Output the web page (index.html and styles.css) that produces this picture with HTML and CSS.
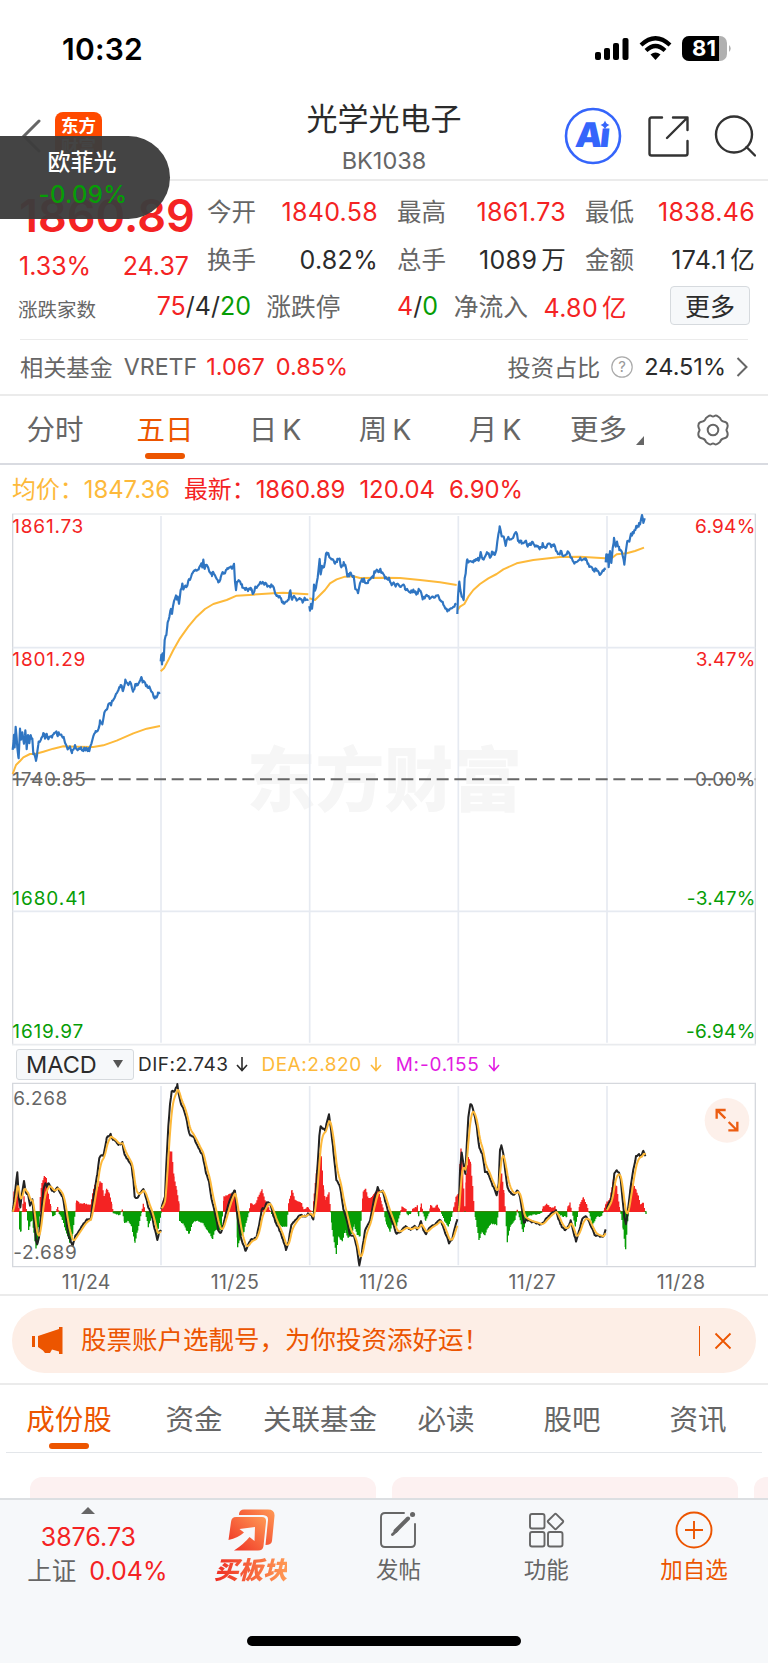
FILE: index.html
```
<!DOCTYPE html>
<html lang="zh-CN">
<head>
    <meta charset="UTF-8">
    <meta name="viewport" content="width=device-width, initial-scale=1.0">
    <title>光学光电子 BK1038</title>
    <link rel="stylesheet" href="styles.css">
</head>
<body>
    <div class="statusbar">
        <span class="clock">10:32</span>
        <svg class="status-icons" width="140" height="30" viewBox="0 0 140 30">
            <rect x="1" y="18" width="6" height="8" rx="2"/>
            <rect x="10" y="14" width="6" height="12" rx="2"/>
            <rect x="19" y="9" width="6" height="17" rx="2"/>
            <rect x="28.500" y="4" width="6" height="22" rx="2"/>
            <g fill="none" stroke="#000" stroke-width="4.200">
                <path d="M47 11Q61.500 -2.500 76 11"/>
                <path d="M52 16.500Q61.500 7.500 71 16.500"/>
            </g>
            <path d="M56.500 20.500Q61.500 16.500 66.500 20.500L61.500 26Z"/>
            <rect x="88" y="2" width="45" height="25" rx="7" fill="#b0b0b0"/>
            <path d="M95 2h30v25h-30a7 7 0 0 1-7-7v-11a7 7 0 0 1 7-7z"/>
            <path d="M135 11q3.500 3.500 0 7z" fill="#b0b0b0"/>
            <text class="battery-num" x="110" y="22" text-anchor="middle">81</text>
        </svg>
    </div>

    <header class="header">
        <div class="header-left">
            <svg width="20" height="34" viewBox="0 0 20 34"><path d="M18 2L3 17L18 32" fill="none" stroke="#666" stroke-width="3" stroke-linecap="round"/></svg>
            <div class="logo"><span>东方</span><span>财富</span></div>
        </div>
        <div class="header-title">
            <h1>光学光电子</h1>
            <p>BK1038</p>
        </div>
        <div class="header-icons">
            <svg width="58" height="58" viewBox="0 0 58 58">
                <circle cx="29" cy="29" r="27" fill="none" stroke="#3565fb" stroke-width="2.600"/>
                <text class="ai-text" transform="translate(10.500 39.500) skewX(-6)"><tspan>A</tspan><tspan x="24.500">ı</tspan></text>
                <path d="M41 13.500q1 3.500 4.500 4.500q-3.500 1-4.500 4.500q-1-3.500-4.500-4.500q3.500-1 4.500-4.500z" fill="#3565fb"/>
            </svg>
            <svg width="42" height="42" viewBox="0 0 42 42" fill="none" stroke="#333" stroke-width="2.400" stroke-linecap="round" stroke-linejoin="round">
                <path d="M15 2.500H4.500q-2 0-2 2v34q0 2 2 2h34q2 0 2-2V26M26 2.500h14.500V15M40 3L20 23"/>
            </svg>
            <svg width="42" height="42" viewBox="0 0 42 42" fill="none" stroke="#333" stroke-width="2.400" stroke-linecap="round">
                <circle cx="20" cy="19.500" r="18"/><path d="M32.500 32L41 40.500"/>
            </svg>
        </div>
    </header>

    <div class="float-stock">
        <b>欧菲光</b>
        <i>-0.09%</i>
    </div>

    <section class="quote">
        <div class="quote-top">
            <div class="quote-price">
                <strong class="price">1860.89</strong>
                <div class="change"><span>1.33%</span><span>24.37</span></div>
            </div>
            <div class="quote-grid">
                <div class="cell"><label>今开</label><span class="red">1840.58</span></div>
                <div class="cell"><label>最高</label><span class="red">1861.73</span></div>
                <div class="cell"><label>最低</label><span class="red">1838.46</span></div>
                <div class="cell"><label>换手</label><span>0.82%</span></div>
                <div class="cell"><label>总手</label><span>1089<em>万</em></span></div>
                <div class="cell"><label>金额</label><span>174.1<em>亿</em></span></div>
            </div>
        </div>
        <div class="quote-bottom">
            <label class="small-label">涨跌家数</label>
            <span class="updown"><span class="red">75</span>/4/<span class="green">20</span></span>
            <label class="limit-label">涨跌停</label>
            <span class="limit"><span class="red">4</span>/<span class="green">0</span></span>
            <label class="flow-label">净流入</label>
            <span class="flow red">4.80<em>亿</em></span>
            <button class="more-btn">更多</button>
        </div>
        <div class="fund">
            <label>相关基金</label>
            <label class="fund-name">VRETF</label>
            <span class="red">1.067</span>
            <span class="red fund-pct">0.85%</span>
            <label class="fund-ratio">投资占比</label>
            <svg width="22" height="22" viewBox="0 0 22 22"><circle cx="11" cy="11" r="10.200" fill="none" stroke="#aaa" stroke-width="1.200"/><text class="help" x="11" y="16.200" text-anchor="middle">?</text></svg>
            <span class="ratio-num">24.51%</span>
            <svg width="12" height="20" viewBox="0 0 12 20"><path d="M1.500 1L10.500 10L1.500 19" fill="none" stroke="#666" stroke-width="2"/></svg>
        </div>
    </section>

    <nav class="tabs">
        <a>分时</a>
        <a class="active">五日</a>
        <a>日<s></s>K</a>
        <a>周<s></s>K</a>
        <a>月<s></s>K</a>
        <a class="tab-more">更多<svg width="8" height="9" viewBox="0 0 8 9"><path d="M8 0V9H0z" fill="#666"/></svg></a>
        <a class="tab-gear"><svg width="34" height="32" viewBox="0 0 34 32" fill="none" stroke="#666" stroke-width="2" stroke-linejoin="round"><path d="M12 2.500Q14 1 15.500 2Q17 3 18.500 2Q20 1 22 2.500L24 4Q25 7 27.500 7.500Q31 8 31.500 10.500Q32 12.500 31 14.500Q30 16 31 17.500Q32 19.500 31.500 21.500Q31 24 27.500 24.500Q25 25 24 28L22 29.500Q20 31 18.500 30Q17 29 15.500 30Q14 31 12 29.500L10 28Q9 25 6.500 24.500Q3 24 2.500 21.500Q2 19.500 3 17.500Q4 16 3 14.500Q2 12.500 2.500 10.500Q3 8 6.500 7.500Q9 7 10 4z"/><circle cx="17" cy="16" r="5.300"/></svg></a>
    </nav>

    <div class="legend">
        <span class="gold">均价：<u>1847.36</u></span>
        <span class="red legend-last">最新：<u>1860.89</u></span>
        <span class="red">120.04</span>
        <span class="red">6.90%</span>
    </div>

    <!-- viewBox units are 3 per pixel -->
    <svg class="price-chart" viewBox="0 36 2304 1602">
        <text class="watermark" x="740" y="918" textLength="826" lengthAdjust="spacingAndGlyphs">东方财富</text>
        <path class="frame" d="M36 42H2268"/>
        <path class="frame side" d="M38 42V1632M2266 42V1632"/>
        <path class="grid" d="M38 443H2266M38 1234H2266M483 48V1628M929 48V1628M1375 48V1628M1821 48V1628"/>
        <path class="frame" d="M36 1634H2268"/>
        <path class="zero" d="M38 838H2266"/>
        <g id="avg" class="line-gold"></g>
        <g id="price" class="line-blue"></g>
        <g class="axis red">
            <text x="37" y="99" textLength="214">1861.73</text>
            <text x="37" y="497" textLength="220">1801.29</text>
            <text x="2267" y="99" text-anchor="end">6.94%</text>
            <text x="2267" y="497" text-anchor="end">3.47%</text>
        </g>
        <g class="axis gray">
            <text x="37" y="857" textLength="221">1740.85</text>
            <text x="2267" y="857" text-anchor="end">0.00%</text>
        </g>
        <g class="axis green">
            <text x="37" y="1216" textLength="221">1680.41</text>
            <text x="37" y="1613" textLength="214">1619.97</text>
            <text x="2267" y="1216" text-anchor="end">-3.47%</text>
            <text x="2267" y="1613" text-anchor="end">-6.94%</text>
        </g>
    </svg>

    <div class="macd-bar">
        <button class="macd-btn">MACD <svg width="10" height="9" viewBox="0 0 10 9"><path d="M0 0h10L5 8z" fill="#555"/></svg></button>
        <span class="dif">DIF:2.743 <svg class="arrow" viewBox="0 0 12 16"><path d="M6 1V14M1 9L6 14.500L11 9"/></svg></span>
        <span class="dea">DEA:2.820 <svg class="arrow" viewBox="0 0 12 16"><path d="M6 1V14M1 9L6 14.500L11 9"/></svg></span>
        <span class="m">M:-0.155 <svg class="arrow" viewBox="0 0 12 16"><path d="M6 1V14M1 9L6 14.500L11 9"/></svg></span>
    </div>

    <svg class="macd-chart" viewBox="0 156 2304 558">
        <path class="grid" d="M483 168V706M929 168V706M1375 168V706M1821 168V706"/>
        <path class="frame box" d="M38 160H2266V710H38z"/>
        <path id="bars-up" fill="#f42323"/>
        <path id="bars-down" fill="#069d06"/>
        <g id="dif" class="line-black"></g>
        <g id="dea" class="line-gold macd-gold"></g>
        <g class="axis gray">
            <text x="40" y="226" textLength="163">6.268</text>
            <text x="40" y="686" textLength="191">-2.689</text>
        </g>
        <circle cx="2181" cy="271" r="67" fill="#fdf0ea"/>
        <path d="M2176 265L2152 241M2150 266V240H2177M2186 276L2210 300M2212 275V301H2185" fill="none" stroke="#ec5d12" stroke-width="7"/>
    </svg>
    <div class="dates"><span>11/24</span><span>11/25</span><span>11/26</span><span>11/27</span><span>11/28</span></div>

    <div class="banner-wrap">
        <div class="banner">
            <svg width="31" height="28" viewBox="0 0 31 28" fill="#ec5500"><path d="M0 9h3v11H0zM6 9L27 2V0h3.500v27H27v-2.500L20 22.500L18 26H13L11 23.500L6 20z"/></svg>
            <span class="banner-text">股票账户选靓号，为你投资添好运！</span>
            <span class="banner-line"></span>
            <svg width="18" height="18" viewBox="0 0 18 18"><path d="M1.500 1.500l15 15M16.500 1.500l-15 15" stroke="#ec5500" stroke-width="1.800"/></svg>
        </div>
    </div>

    <nav class="tabs tabs2">
        <a class="active">成份股</a>
        <a>资金</a>
        <a>关联基金</a>
        <a>必读</a>
        <a>股吧</a>
        <a>资讯</a>
    </nav>
    <div class="cards"><div></div><div></div><div></div></div>

    <footer class="footer">
        <div class="index">
            <svg width="14" height="8" viewBox="0 0 14 8"><path d="M0 7L7 0L14 7z" fill="#666"/></svg>
            <span class="red">3876.73</span>
            <div><label>上证</label><span class="red">0.04%</span></div>
        </div>
        <div class="foot-item buy">
            <svg width="48" height="44" viewBox="0 0 48 44">
                <defs>
                    <linearGradient id="hot" x1="0" y1="1" x2="1" y2="0"><stop offset="0" stop-color="#ee2d22"/><stop offset="1" stop-color="#ff9a55"/></linearGradient>
                </defs>
                <path d="M12 6Q12.500 1.500 17 1.500H41Q48 1.500 47.500 8L45 33Q44.500 37 38.500 37L41 12Q41.500 7.500 36 7H12z" fill="url(#hot)"/>
                <path d="M4 14Q4.500 9 9 9H35Q39.500 9 39 14L36.500 38Q36 42.500 31 42.500H7Q17 36 22.500 29L27.500 33L28 19L12.500 21L17 24.500Q11 30 1.500 32z" fill="url(#hot)"/>
            </svg>
            <span>买板块</span>
        </div>
        <div class="foot-item">
            <svg width="38" height="38" viewBox="0 0 38 38" fill="none" stroke="#666" stroke-width="1.900" stroke-linecap="round">
                <path d="M25 2H6Q2 2 2 6V32Q2 36 6 36H32Q36 36 36 32V13"/>
                <path d="M16.500 20L29 7.500" stroke-width="4"/><path d="M13.500 23.500L18 19.500" stroke-width="3"/><path d="M33.500 3.500h.1" stroke-width="5"/>
            </svg>
            <span>发帖</span>
        </div>
        <div class="foot-item">
            <svg width="38" height="38" viewBox="0 0 38 38" fill="none" stroke="#666" stroke-width="1.900" stroke-linejoin="round">
                <rect x="3" y="3" width="14.500" height="14.500" rx="2"/><rect x="3" y="21" width="14.500" height="14.500" rx="2"/><rect x="21" y="21" width="14.500" height="14.500" rx="2"/>
                <path d="M27.500 3.300Q28.500 2.300 29.500 3.300L35.700 9.500Q36.700 10.500 35.700 11.500L29.500 17.700Q28.500 18.700 27.500 17.700L21.300 11.500Q20.300 10.500 21.300 9.500z"/>
            </svg>
            <span>功能</span>
        </div>
        <div class="foot-item add">
            <svg width="38" height="38" viewBox="0 0 38 38" fill="none" stroke="#ec5500" stroke-width="1.900"><circle cx="19" cy="19" r="17.500"/><path d="M19 10v18M10 19h18"/></svg>
            <span>加自选</span>
        </div>
        <div class="home-bar"></div>
    </footer>

    <script src="chart.js"></script>
</body>
</html>
```
FILE: styles.css
```
* {
    box-sizing: border-box;
}
body {
    margin: 0;
    width: 768px;
    height: 1663px;
    overflow: hidden;
    position: relative;
    background-color: #fff;
    color: #2b2b2b;
    font-family: Inter, "Noto Sans CJK SC", sans-serif;
}
svg {
    display: block;
    flex: none;
}
label {
    color: #666;
}
em, i, u {
    font-style: normal;
    text-decoration: none;
}
.red {
    color: #f42323;
    fill: #f42323;
}
.green {
    color: #069d06;
    fill: #069d06;
}
.gray {
    fill: #666;
}
.gold {
    color: #fdb93a;
}

/* status bar */
.statusbar {
    display: flex;
    justify-content: space-between;
    align-items: center;
    height: 98px;
    padding: 0 34px 0 62px;
}
.clock {
    font-size: 30px;
    font-weight: 600;
    color: #000;
    letter-spacing: 0.2px;
}
.battery-num {
    font-size: 22px;
    font-weight: 700;
    fill: #fff;
}

/* header */
.header {
    display: flex;
    justify-content: space-between;
    height: 83px;
    border-bottom: 2px solid #ebebeb;
}
.header-left {
    display: flex;
    width: 280px;
    padding: 21px 0 0 21px;
}
.logo {
    width: 47px;
    height: 47px;
    margin: -7px 0 0 14px;
    padding-top: 3px;
    border-radius: 8px;
    background-color: #ff4a00;
    color: #fff;
    font-size: 17.500px;
    font-weight: 700;
    line-height: 21px;
    text-align: center;
}
.logo span {
    display: block;
}
.header-title {
    text-align: center;
}
.header-title h1 {
    margin: 1px 0 0;
    font-size: 31px;
    line-height: 40px;
    font-weight: 400;
}
.header-title p {
    margin: 10px 0 0;
    color: #666;
    font-size: 23.500px;
    line-height: 24px;
}
.header-icons {
    display: flex;
    align-items: center;
    justify-content: flex-end;
    width: 280px;
    height: 58px;
    margin-top: 9px;
    padding-right: 12px;
    gap: 25px;
}
.ai-text {
    font-size: 34px;
    font-weight: 900;
    fill: #3565fb;
}
.float-stock {
    position: absolute;
    left: 0;
    top: 136px;
    width: 170px;
    height: 83px;
    padding: 9px 15px 0 0;
    border-radius: 0 42px 42px 0;
    background-color: rgba(60, 60, 60, 0.96);
    text-align: center;
}
.float-stock b {
    display: block;
    padding-left: 9px;
    color: #fff;
    font-size: 23px;
    line-height: 34px;
    font-weight: 500;
}
.float-stock i {
    display: block;
    padding-left: 11px;
    color: #069d06;
    font-size: 24px;
    line-height: 32px;
    font-weight: 500;
    letter-spacing: 0.3px;
}

/* quote */
.quote {
    height: 215px;
    border-bottom: 2px solid #ebebeb;
    font-size: 25px;
}
.quote-top {
    display: flex;
    height: 102px;
}
.quote-price {
    width: 207px;
    padding: 6px 0 0 19px;
    color: #f42323;
}
.price {
    display: block;
    font-size: 45px;
    line-height: 58px;
    font-weight: 600;
}
.change {
    display: flex;
    justify-content: space-between;
    padding-right: 18px;
    line-height: 43px;
}
.quote-grid {
    display: grid;
    grid-template-columns: 171px 169px 170px;
    grid-auto-rows: 47.500px;
    column-gap: 19px;
    padding-top: 8px;
}
.cell {
    display: flex;
    justify-content: space-between;
    line-height: 47px;
}
.cell label {
    font-size: 24.500px;
}
.cell span {
    letter-spacing: 0.3px;
}
em {
    font-size: 24.500px;
    margin-left: 4px;
}
.quote-bottom {
    display: flex;
    align-items: center;
    height: 46px;
    padding: 0 18px;
}
.quote-bottom label {
    padding-bottom: 2px;
    font-size: 24.700px;
}
.quote-bottom .small-label {
    width: 139px;
    padding: 5px 0 0;
    font-size: 19.500px;
}
.updown {
    width: 110px;
}
.quote-bottom .limit-label {
    width: 131px;
}
.limit {
    width: 57px;
}
.quote-bottom .flow-label {
    width: 90px;
}
.flow {
    width: 127px;
    letter-spacing: 0.3px;
}
.more-btn {
    width: 80px;
    height: 39px;
    margin-top: -2px;
    padding: 0 0 4px;
    border: 1px solid #d6dade;
    border-radius: 4px;
    background-color: #f6f8fa;
    color: #2b2b2b;
    font: 25px Inter, "Noto Sans CJK SC", sans-serif;
}
.fund {
    display: flex;
    align-items: center;
    height: 54px;
    margin: 10px 20px 0;
    border-top: 1px solid #ebebeb;
    font-size: 23.500px;
}
.fund label {
    padding-bottom: 2px;
    font-size: 23.200px;
}
.fund .fund-name {
    margin: 0 9px 0 11px;
    padding: 0;
}
.fund-pct {
    margin-left: 11px;
}
.fund .fund-ratio {
    margin: 0 11px 0 auto;
}
.help {
    font-size: 15px;
    fill: #999;
}
.ratio-num {
    margin: 0 10px 0 11px;
}

/* tabs */
.tabs {
    display: grid;
    grid-template-columns: repeat(7, 110px);
    height: 69px;
    border-bottom: 2px solid #d9dbe1;
    color: #666;
    font-size: 28.500px;
}
.tabs a {
    display: flex;
    justify-content: center;
    line-height: 68px;
}
.tabs s {
    width: 5px;
}
.tabs .active {
    flex-direction: column;
    justify-content: flex-start;
    align-items: center;
    color: #ec5500;
}
.active::after {
    content: "";
    width: 40px;
    height: 6px;
    margin-top: -11px;
    border-radius: 3px;
    background-color: #ec5500;
}
.tab-more svg {
    margin: 40px 0 0 9px;
}
.tabs .tab-gear {
    padding: 18px 4px 0 0;
}
.tabs .tab-more {
    padding-left: 4px;
}

.legend {
    display: flex;
    height: 47px;
    padding-left: 12px;
    gap: 14px;
    font-size: 23.900px;
    line-height: 49px;
}

/* charts */
.price-chart {
    width: 768px;
    height: 534px;
}
.frame {
    fill: none;
    stroke: #e9ebee;
    stroke-width: 5;
}
.side, .box {
    stroke: #d5d8dd;
    stroke-width: 4;
}
.grid {
    fill: none;
    stroke: #e6eaf1;
    stroke-width: 5;
}
.zero {
    stroke: #666;
    stroke-width: 6;
    stroke-dasharray: 36 17;
}
.watermark {
    font-family: "Noto Sans CJK SC", sans-serif;
    font-size: 210px;
    font-weight: 900;
    fill: #f6f6f6;
}
.axis {
    font-size: 57px;
    letter-spacing: 0.9px;
}
.line-gold, .line-blue, .line-black {
    fill: none;
    stroke: #fdb93a;
    stroke-width: 6;
    stroke-linejoin: round;
}
.line-blue {
    stroke: #2f75c2;
    stroke-width: 6.500;
}
.line-black {
    stroke: #222;
}
.macd-bar {
    display: flex;
    align-items: center;
    height: 36px;
    padding-left: 16px;
    font-size: 19px;
    letter-spacing: 0.5px;
}
.macd-btn {
    display: flex;
    align-items: center;
    justify-content: space-between;
    width: 118px;
    height: 31px;
    margin-right: 4px;
    padding: 0 10px 0 9px;
    border: 1px solid #d6dade;
    border-radius: 3px;
    background-color: #f6f8fa;
    color: #2b2b2b;
    font: 23.500px Inter, sans-serif;
}
.macd-bar span {
    display: flex;
    align-items: center;
    gap: 8px;
}
.arrow {
    width: 12px;
    height: 16px;
    fill: none;
    stroke: currentColor;
    stroke-width: 1.600;
}
.macd-bar .dea {
    margin: 0 14px 0 13px;
    color: #fdb93a;
}
.macd-bar .m {
    letter-spacing: 0.8px;
    color: #e21be2;
}
.macd-chart {
    width: 768px;
    height: 186px;
}
.dates {
    display: grid;
    grid-template-columns: repeat(5, 148.700px);
    height: 28px;
    padding-left: 12px;
    border-bottom: 2px solid #ebebeb;
    color: #666;
    font-size: 19.500px;
    line-height: 28px;
    letter-spacing: 0.4px;
    text-align: center;
}

/* banner */
.banner-wrap {
    height: 89px;
    padding: 12px 12px 0;
    border-bottom: 2px solid #ebebeb;
}
.banner {
    display: flex;
    align-items: center;
    height: 65px;
    padding: 0 24px 0 20px;
    border-radius: 33px;
    background-color: #fdeee6;
    color: #ec5500;
}
.banner-text {
    margin: 0 auto 0 18px;
    padding-bottom: 6px;
    font-size: 25.500px;
}
.banner-line {
    width: 1.500px;
    height: 30px;
    margin-right: 14px;
    background-color: #ec5500;
}

.tabs2 {
    grid-template-columns: 126px 124px 128px 124px 128px 124px;
    height: 68px;
    margin: 0 6px;
    border-bottom: 1px solid #e3e6ea;
    font-size: 28.500px;
}
.tabs2 a {
    line-height: 69px;
}
.cards {
    display: grid;
    grid-template-columns: repeat(3, 346px);
    gap: 16px;
    height: 45px;
    padding: 24px 0 0 30px;
    overflow: hidden;
}
.cards div {
    border-radius: 12px 12px 0 0;
    background-color: #fdf1f1;
}

/* footer */
.footer {
    display: flex;
    position: relative;
    height: 165px;
    border-top: 2px solid #dcdfe2;
    background-color: #f6f8fa;
}
.index {
    display: flex;
    flex-direction: column;
    align-items: center;
    width: 177px;
    padding-top: 7px;
    font-size: 25px;
    line-height: 34px;
}
.index > span {
    margin-top: 5px;
}
.index label {
    margin-right: 13px;
    font-size: 24.500px;
}
.index div {
    margin-left: 18px;
}
.foot-item {
    display: flex;
    flex-direction: column;
    align-items: center;
    width: 148px;
    padding-top: 11px;
    color: #666;
    font-size: 22.500px;
    line-height: 32px;
}
.foot-item span {
    margin-top: 5px;
}
.buy {
    padding-top: 8px;
}
.buy span {
    margin-top: 2px;
    background-image: linear-gradient(90deg, #ee2d22, #ff9a55);
    background-clip: text;
    color: transparent;
    font-size: 24.500px;
    font-weight: 900;
    font-style: italic;
}
.add {
    color: #ec5500;
}
.home-bar {
    position: absolute;
    left: 247px;
    top: 136px;
    width: 274px;
    height: 10px;
    border-radius: 5px;
    background-color: #000;
}
```
FILE: chart.js
```
// one string per trading day, "x,y" pairs
var price = [
    '38,750 42,705 44,740 47,680 52,740 56,775 60,690 63,725 67,700 72,735 76,695 80,745 84,710 88,730 92,705 97,720 100,765 104,765 108,780 112,760 116,725 122,715 130,700 135,712 140,702 145,715 150,705 158,708 163,698 169,692 173,705 178,698 185,712 192,715 198,738 203,750 210,742 217,755 225,735 233,752 240,745 250,750 260,745 268,752 275,728 280,710 287,695 293,690 300,665 307,675 315,628 322,622 328,608 333,612 340,595 348,585 355,572 362,555 369,570 376,540 382,555 390,545 400,575 407,555 415,550 425,535 432,550 440,558 448,560 455,575 465,592 470,590 474,578 480,577',
    '482,490 484,460 486,490 488,460 491,485 494,415 499,400 503,370 508,345 513,322 516,342 522,305 528,292 533,295 537,310 542,275 547,252 550,268 556,255 562,258 567,238 570,245 577,218 584,215 590,208 598,203 604,192 607,205 610,182 614,210 617,195 625,208 632,215 636,225 639,212 647,228 655,245 662,235 668,215 675,216 682,208 690,202 697,200 702,188 705,240 708,265 713,240 720,240 727,262 733,268 738,262 745,270 752,265 760,285 767,262 775,255 782,250 790,252 796,246 805,258 818,258 823,272 830,285 840,290 850,312 858,305 866,300 871,270 876,300 882,292 890,300 900,300 908,302 917,297 925,298',
    '928,318 930,332 933,310 936,330 940,290 942,255 945,275 950,248 955,218 959,180 962,222 966,200 972,205 975,180 980,155 985,160 990,175 994,182 998,178 1005,195 1012,180 1019,178 1024,205 1031,190 1036,195 1042,225 1047,230 1052,215 1061,232 1066,262 1074,275 1083,242 1092,240 1098,248 1105,245 1112,230 1120,228 1127,210 1135,218 1141,208 1147,222 1155,230 1161,235 1167,232 1175,250 1190,255 1205,255 1215,262 1228,275 1240,270 1250,280 1258,268 1268,295 1280,285 1290,295 1305,290 1316,292 1322,305 1330,310 1336,320 1344,333 1352,325 1360,322 1368,315',
    '1372,338 1374,290 1378,245 1381,265 1385,285 1391,295 1394,230 1398,210 1402,175 1407,190 1413,180 1420,183 1428,178 1436,180 1442,158 1448,178 1455,168 1463,160 1470,168 1478,158 1486,165 1492,130 1495,100 1499,84 1505,108 1511,115 1517,133 1525,115 1533,118 1540,112 1548,98 1555,120 1565,128 1575,122 1583,135 1590,135 1598,128 1605,140 1613,138 1620,145 1628,135 1636,142 1645,135 1655,140 1662,135 1668,155 1676,160 1684,158 1692,168 1700,160 1706,155 1712,172 1720,185 1726,188 1735,180 1742,172 1750,180 1757,178 1765,195 1773,200 1780,212 1790,210 1800,220 1808,216 1815,210',
    '1817,185 1819,160 1822,185 1824,158 1826,200 1830,155 1834,185 1838,150 1842,115 1847,140 1851,130 1858,148 1865,155 1868,165 1873,190 1878,145 1882,118 1888,130 1893,105 1898,100 1903,90 1910,82 1917,75 1923,60 1926,48 1930,68 1934,55'
];
var avg = [
    '38,822 48,795 60,783 70,772 90,762 105,762 130,755 160,746 190,739 230,740 280,741 310,736 350,722 400,700 440,686 480,678',
    '482,514 492,505 505,480 520,450 540,415 565,380 590,350 615,327 640,312 680,300 710,287 760,284 820,280 850,278 925,283',
    '928,295 945,300 960,285 975,270 990,250 1010,238 1035,230 1060,229 1080,234 1150,233 1200,234 1260,240 1320,247 1370,255',
    '1373,330 1380,320 1393,312 1405,290 1420,270 1440,252 1465,235 1490,222 1510,208 1550,190 1600,180 1680,171 1740,170 1815,175',
    '1818,182 1835,175 1850,163 1880,160 1905,153 1932,143'
];
var dif = [
    '38,545 46,480 52,425 57,510 61,535 66,490 72,455 78,490 84,495 90,525 97,510 103,580 108,630 112,645 117,620 123,560 130,480 136,462 141,470 146,458 153,475 162,488 172,470 180,485 188,500 195,540 201,590 207,620 218,645 226,620 235,605 245,590 255,575 265,568 272,568 278,520 285,475 292,430 298,385 304,375 310,378 316,350 320,322 326,318 332,310 336,325 345,332 355,345 367,338 374,375 385,390 395,410 400,450 404,500 410,505 420,490 430,475 437,500 445,530 455,555 465,600 472,628 478,605 483,600',
    '484,535 490,515 495,500 499,400 505,290 510,220 515,185 525,182 532,165 537,195 543,225 550,235 558,260 568,312 580,320 590,340 600,362 608,375 618,430 628,460 635,510 645,550 655,600 663,610 670,585 678,550 688,515 697,490 705,480 710,540 717,590 722,620 730,645 737,662 742,650 752,630 768,625 777,590 785,540 795,530 802,515 810,520 820,555 828,580 838,600 848,625 858,660 866,635 874,582 884,575 895,560 905,555 915,560 926,548',
    '928,550 934,555 940,568 946,500 953,400 958,320 962,288 968,295 976,302 981,275 987,255 993,300 1000,360 1009,450 1020,470 1030,535 1040,570 1050,615 1062,620 1070,650 1078,705 1085,670 1095,600 1110,570 1122,510 1133,473 1140,485 1148,480 1155,510 1165,545 1175,570 1190,613 1205,600 1218,590 1232,600 1245,588 1252,600 1263,575 1270,600 1278,612 1290,592 1310,580 1320,568 1330,590 1340,620 1347,640 1357,625 1365,590 1372,568',
    '1376,545 1380,420 1385,365 1390,400 1396,430 1400,350 1405,260 1411,225 1416,225 1422,250 1430,290 1438,355 1447,370 1455,425 1465,430 1475,460 1485,480 1490,495 1496,460 1500,360 1504,345 1510,370 1515,420 1523,475 1533,490 1542,495 1553,482 1560,500 1566,540 1572,580 1580,568 1595,575 1610,578 1625,585 1640,565 1655,550 1668,542 1675,565 1685,590 1695,600 1705,590 1712,570 1720,605 1728,632 1738,600 1748,565 1757,560 1767,572 1775,595 1785,615 1800,618 1810,620 1817,598',
    '1820,540 1826,520 1832,510 1838,480 1843,430 1850,422 1857,430 1862,450 1868,510 1873,560 1878,580 1884,540 1892,470 1900,420 1908,380 1917,375 1925,378 1930,362 1937,378'
];
var hist = '38,544 42,485 48,470 54,500 57,535 59,600 63,605 66,544 72,500 76,520 80,545 86,600 92,575 97,570 102,610 108,655 113,640 118,560 121,500 126,460 133,440 139,445 145,490 152,530 158,560 165,555 173,530 178,550 188,570 200,610 210,640 218,610 226,544 230,510 240,522 250,520 272,525 278,490 284,465 292,480 300,455 306,460 313,505 320,475 328,490 335,520 340,548 350,553 360,555 367,540 374,580 385,572 395,590 405,638 413,600 424,550 430,520 436,545 445,590 455,560 465,570 472,610 478,580 483,550 485,525 490,510 496,495 502,430 507,360 515,365 522,440 530,480 537,520 539,575 550,580 560,600 568,612 577,580 590,570 600,575 610,580 620,600 630,610 638,628 645,600 655,600 664,600 668,544 672,500 680,495 695,490 706,490 709,544 713,650 722,620 732,605 740,570 746,550 752,520 765,525 775,500 786,480 795,510 803,525 812,545 825,570 835,585 850,590 860,590 866,520 876,480 885,510 895,515 905,520 912,540 922,530 930,540 938,545 943,490 950,420 957,370 964,380 971,480 976,510 981,500 987,488 992,545 997,600 1009,672 1015,620 1027,635 1035,600 1045,625 1055,610 1063,585 1072,615 1080,620 1085,540 1090,485 1097,475 1105,505 1115,500 1125,490 1135,480 1143,510 1152,545 1160,585 1170,603 1178,580 1190,590 1200,550 1206,530 1218,535 1222,555 1232,550 1240,535 1252,528 1256,560 1264,522 1270,550 1277,572 1287,550 1292,525 1302,535 1312,525 1322,545 1335,575 1345,590 1355,560 1362,530 1368,500 1376,490 1380,400 1383,355 1388,420 1395,545 1399,430 1405,380 1412,400 1418,470 1423,544 1428,570 1437,632 1445,605 1455,615 1465,590 1475,580 1490,585 1495,544 1500,440 1505,430 1512,490 1516,544 1522,635 1530,590 1545,570 1552,540 1558,560 1570,608 1580,560 1595,555 1625,550 1630,530 1640,522 1655,535 1665,530 1672,550 1690,560 1700,560 1704,530 1710,518 1716,545 1726,590 1735,545 1740,520 1750,502 1760,525 1768,548 1778,585 1790,560 1805,558 1814,535 1818,520 1830,505 1840,450 1850,470 1858,530 1863,550 1870,600 1877,658 1884,560 1888,510 1893,460 1900,460 1908,480 1915,500 1922,525 1930,518 1935,544 1938,552';
var ZERO = 544;

function parse(str) {
    return str.split(' ').map(function (p) {
        return p.split(',').map(Number);
    });
}

// linear samples every `step` units, with a small tick noise
function sample(points, step, noise) {
    var out = [];
    for (var i = 0; i < points.length - 1; i++) {
        var a = points[i], b = points[i + 1];
        for (var x = a[0]; x < b[0]; x += step) {
            var t = (x - a[0]) / (b[0] - a[0]);
            var n = Math.sin(x * 12.9898) * 43758.5453;
            n = (n - Math.floor(n) - 0.5) * noise;
            out.push([x, a[1] + (b[1] - a[1]) * t + n]);
        }
    }
    out.push(points[points.length - 1]);
    return out;
}

function draw(id, points) {
    var line = document.createElementNS('http://www.w3.org/2000/svg', 'polyline');
    line.setAttribute('points', points.join(' '));
    document.getElementById(id).appendChild(line);
}

price.forEach(function (day) { draw('price', sample(parse(day), 3, 12)); });
avg.forEach(function (day) { draw('avg', parse(day)); });
dif.forEach(function (day) {
    draw('dif', sample(parse(day), 3, 6));
    // DEA trails DIF
    var prev = null, px = 0;
    draw('dea', sample(parse(day), 2, 0).map(function (p) {
        var k = 1 - Math.exp(-(p[0] - px) / 7);
        prev = prev === null ? p[1] : prev + (p[1] - prev) * k;
        px = p[0];
        return [p[0], prev];
    }));
});

var up = '', down = '';
sample(parse(hist), 3, 4).forEach(function (p) {
    var bar = 'M' + (p[0] - 2) + ' ' + ZERO + 'V' + p[1] + 'h4V' + ZERO + 'z';
    if (p[1] < ZERO) up += bar; else down += bar;
});
up += 'M38 543H1938v3H38z';
document.getElementById('bars-up').setAttribute('d', up);
document.getElementById('bars-down').setAttribute('d', down);
```
